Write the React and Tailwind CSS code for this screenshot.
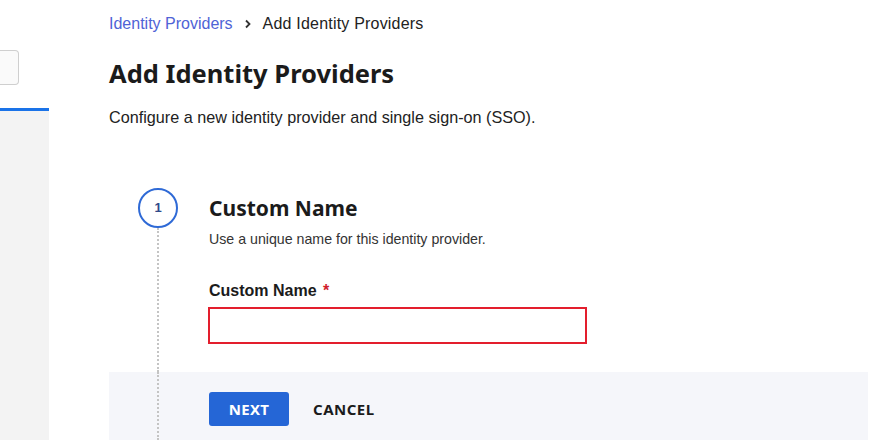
import React from 'react';

const heading = { fontFamily: '"Noto Sans", "Open Sans", sans-serif' };

const StepCircle = ({ n }) => (
    <div className="w-[40px] h-[40px] rounded-full border-2 border-[#2f6ad6] flex items-center justify-center text-[13px] font-bold text-[#2f4a8a] bg-white">
        {n}
    </div>
);

const App = () => {
    return (
        <div className="flex h-[440px] w-full overflow-hidden bg-white font-['Liberation_Sans',Arial,sans-serif] text-[#222]">
            {/* Sidebar stub */}
            <aside className="w-[49px] shrink-0 flex flex-col">
                <div className="pt-[50px]">
                    <div className="w-[19px] h-[35px] rounded-r-[4px] border border-l-0 border-[#cfcfcf] bg-[#fafafa]" />
                </div>
                <div className="mt-[23px] h-[3px] bg-[#1a73e8]" />
                <div className="flex-1 bg-[#f3f3f3]" />
            </aside>

            {/* Main */}
            <main className="flex-1 flex flex-col pl-[60px] pr-[17px] min-w-0">
                {/* Breadcrumb */}
                <nav className="pt-[15px] flex items-center h-[33px] text-[16px] leading-[18px]">
                    <a href="#" className="text-[#4f63d6]">Identity Providers</a>
                    <svg className="ml-[11px] mr-[11px]" width="8" height="10" viewBox="0 0 8 10" fill="none">
                        <path d="M2 1.5 L5.5 5 L2 8.5" stroke="#333" strokeWidth="1.8" />
                    </svg>
                    <span className="text-[#222] tracking-[0.2px]">Add Identity Providers</span>
                </nav>

                <h1 className="mt-[22px] text-[25.5px] leading-[36px] font-bold text-[#1b1b1b]" style={heading}>
                    Add Identity Providers
                </h1>
                <p className="mt-[16px] text-[16.2px] leading-[20px] text-[#222]">
                    Configure a new identity provider and single sign-on (SSO).
                </p>

                {/* Step 1 */}
                <section className="mt-[61px] flex flex-col flex-1">
                    <div className="flex">
                        <div className="w-[98px] shrink-0 flex flex-col items-center">
                            <StepCircle n={1} />
                            <div className="flex-1 border-l-2 border-dotted border-[#c4c4c4]" />
                        </div>
                        <div className="ml-[1px] pt-[6px] pb-[28px]">
                            <h2 className="ml-[1px] text-[21px] leading-[28px] font-bold text-[#1b1b1b]" style={heading}>
                                Custom Name
                            </h2>
                            <p className="ml-[1px] mt-[8px] text-[14.2px] leading-[18px] text-[#333]">
                                Use a unique name for this identity provider.
                            </p>
                            <label className="ml-[1px] block mt-[33px] text-[16px] leading-[20px] font-bold text-[#1b1b1b]">
                                Custom Name <span className="ml-[2px] text-[#d0202c]">*</span>
                            </label>
                            <input
                                type="text"
                                className="mt-[6px] block w-[379px] h-[37px] border-2 border-[#e31e2d] bg-white outline-none px-2 text-sm"
                            />
                        </div>
                    </div>

                    {/* Footer actions */}
                    <div className="flex flex-1 bg-[#f5f6fa]">
                        <div className="w-[98px] shrink-0 flex justify-center">
                            <div className="border-l-2 border-dotted border-[#c4c4c4]" />
                        </div>
                        <div className="ml-[2px] pt-[20px] flex items-start gap-[24px]" style={heading}>
                            <button className="w-[80px] h-[34px] rounded-[3px] bg-[#2566d6] text-white text-[15px] font-bold tracking-[0.3px]">
                                NEXT
                            </button>
                            <button className="h-[34px] text-[15px] font-bold text-[#1b1b1b] tracking-[0.5px]">
                                CANCEL
                            </button>
                        </div>
                    </div>
                </section>
            </main>
        </div>
    );
};

export default App;
